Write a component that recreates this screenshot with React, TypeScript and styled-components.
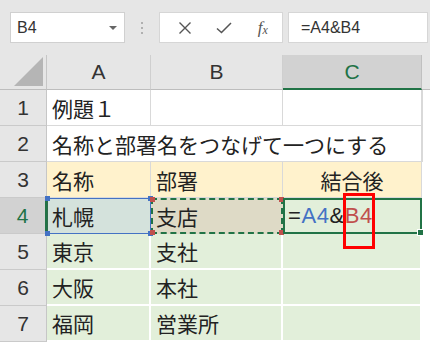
import React from 'react'
import styled, { createGlobalStyle } from 'styled-components'

const Global = createGlobalStyle`
  html, body { margin: 0; padding: 0; background: #ffffff; }
  body { font-family: "Noto Sans CJK JP", "Liberation Sans", sans-serif; }
`

const CJK = `"Noto Sans CJK JP", sans-serif`
const LATIN = `"Liberation Sans", Arial, sans-serif`

const rows = [
  { n: 1 },
  { n: 2 },
  { n: 3 },
  { n: 4 },
  { n: 5, a: '東京', b: '支社' },
  { n: 6, a: '大阪', b: '本社' },
  { n: 7, a: '福岡', b: '営業所' },
]

const App = () => {
  return (
    <>
      <Global />
      <Window>
        <Toolbar>
          <NameBox>
            <NameText>B4</NameText>
            <Caret />
          </NameBox>
          <Grip>
            <Dot />
            <Dot />
            <Dot />
          </Grip>
          <FxBox>
            <FxButton>
              <svg width="14" height="14" viewBox="0 0 14 14">
                <path d="M1.5 1.5 L12.5 12.5 M12.5 1.5 L1.5 12.5" stroke="#555" strokeWidth="1.4" fill="none" />
              </svg>
            </FxButton>
            <FxButton>
              <svg width="16" height="12" viewBox="0 0 16 12">
                <path d="M1 6.5 L5.5 10.5 L15 1" stroke="#555" strokeWidth="1.5" fill="none" />
              </svg>
            </FxButton>
            <FxButton>
              <FxText>
                f<sub>x</sub>
              </FxText>
            </FxButton>
          </FxBox>
          <FormulaInput>=A4&amp;B4</FormulaInput>
        </Toolbar>

        <Sheet>
          <Corner>
            <Triangle />
          </Corner>
          <ColHead>A</ColHead>
          <ColHead>B</ColHead>
          <ColHead $active>C</ColHead>
          <ColFill />

          {rows.map((r) => (
            <React.Fragment key={r.n}>
              <RowHead $active={r.n === 4}>{r.n}</RowHead>
              {r.n === 1 && (
                <>
                  <Cell>例題１</Cell>
                  <Cell />
                  <Cell />
                </>
              )}
              {r.n === 2 && <Cell $span={3}>名称と部署名をつなげて一つにする</Cell>}
              {r.n === 3 && (
                <>
                  <Cell $bg="#fff2cc">名称</Cell>
                  <Cell $bg="#fff2cc">部署</Cell>
                  <Cell $bg="#fff2cc" $center>結合後</Cell>
                </>
              )}
              {r.n === 4 && (
                <>
                  <RefCellA>
                    札幌
                    <Handle $c="#4472c4" $x="left" $y="top" />
                    <Handle $c="#4472c4" $x="right" $y="top" />
                    <Handle $c="#4472c4" $x="left" $y="bottom" />
                    <Handle $c="#4472c4" $x="right" $y="bottom" />
                  </RefCellA>
                  <RefCellB>
                    支店
                    <Handle $c="#c0504d" $x="left" $y="top" />
                    <Handle $c="#c0504d" $x="right" $y="top" />
                    <Handle $c="#c0504d" $x="left" $y="bottom" />
                    <Handle $c="#c0504d" $x="right" $y="bottom" />
                  </RefCellB>
                  <ActiveCell>
                    <Formula>
                      =<Ref $c="#4472c4">A4</Ref>&amp;<Ref $c="#c0504d">B4</Ref>
                      <Cursor />
                    </Formula>
                    <Mark />
                    <FillHandle />
                  </ActiveCell>
                </>
              )}
              {r.a && (
                <>
                  <Cell $bg="#e2efda" $line="#ffffff">{r.a}</Cell>
                  <Cell $bg="#e2efda" $line="#ffffff">{r.b}</Cell>
                  <Cell $bg="#e2efda" $line="#ffffff" />
                </>
              )}
              <Fill $edge={r.n <= 2} />
            </React.Fragment>
          ))}
        </Sheet>
      </Window>
    </>
  )
}

export default App

const Window = styled.div`
width: 430px;
height: 350px;
overflow: hidden;
background: #ffffff;
`

const Toolbar = styled.div`
height: 55px;
box-sizing: border-box;
padding: 12px 0 0 10px;
background: #e6e6e6;
display: flex;
align-items: flex-start;
`

const NameBox = styled.div`
width: 115px;
height: 31px;
box-sizing: border-box;
background: #ffffff;
border: 1px solid #d0d0d0;
display: flex;
align-items: center;
justify-content: space-between;
padding: 0 7px 0 6px;
`

const NameText = styled.span`
font-family: ${LATIN};
font-size: 16px;
color: #333;
`

const Caret = styled.span`
width: 0;
height: 0;
border-left: 4px solid transparent;
border-right: 4px solid transparent;
border-top: 4px solid #666;
`

const Grip = styled.div`
width: 34px;
height: 31px;
display: flex;
flex-direction: column;
align-items: center;
justify-content: center;
gap: 3px;
`

const Dot = styled.span`
width: 2px;
height: 2px;
background: #b0b0b0;
`

const FxBox = styled.div`
width: 124px;
height: 31px;
box-sizing: border-box;
background: #ffffff;
border: 1px solid #d6d6d6;
display: flex;
align-items: center;
padding-left: 6px;
`

const FxButton = styled.div`
width: 40px;
height: 100%;
display: flex;
align-items: center;
justify-content: center;
`

const FxText = styled.span`
font-family: "Liberation Serif", "Times New Roman", serif;
font-style: italic;
font-size: 17px;
color: #555;
sub {
  font-size: 12px;
  vertical-align: -1px;
}
`

const FormulaInput = styled.div`
flex: 1;
margin-left: 5px;
margin-right: 2px;
height: 31px;
box-sizing: border-box;
background: #ffffff;
border: 1px solid #d6d6d6;
padding-left: 12px;
display: flex;
align-items: center;
font-family: ${LATIN};
font-size: 16px;
color: #333;
`

const Sheet = styled.div`
display: grid;
grid-template-columns: 47px 104px 132px 139px 1fr;
grid-template-rows: 35px repeat(7, 36px);
`

const Corner = styled.div`
background: #e6e6e6;
border-right: 1px solid #c6c6c6;
border-bottom: 1px solid #bdbdbd;
display: flex;
align-items: flex-end;
justify-content: flex-end;
padding: 0 3px 3px 0;
`

const Triangle = styled.div`
width: 29px;
height: 29px;
background: #b5b5b5;
clip-path: polygon(100% 0, 100% 100%, 0 100%);
`

const ColHead = styled.div<{ $active?: boolean }>`
background: ${(p) => (p.$active ? '#d2d2d2' : '#e6e6e6')};
border-right: 1px solid ${(p) => (p.$active ? '#c0c0c0' : '#cfcfcf')};
border-bottom: ${(p) => (p.$active ? '2px solid #217346' : '1px solid #bdbdbd')};
box-sizing: border-box;
display: flex;
align-items: center;
justify-content: center;
font-family: ${LATIN};
font-size: 21px;
color: ${(p) => (p.$active ? '#217346' : '#333')};
`

const ColFill = styled.div`
background: #e6e6e6;
border-bottom: 1px solid #bdbdbd;
`

const RowHead = styled.div<{ $active?: boolean }>`
background: ${(p) => (p.$active ? '#d2d2d2' : '#e6e6e6')};
border-right: ${(p) => (p.$active ? '2px solid #217346' : '1px solid #c6c6c6')};
border-bottom: 1px solid #cacaca;
box-sizing: border-box;
display: flex;
align-items: center;
justify-content: center;
font-family: ${LATIN};
font-size: 21px;
color: ${(p) => (p.$active ? '#217346' : '#333')};
`

const Cell = styled.div<{ $bg?: string; $line?: string; $center?: boolean; $span?: number }>`
grid-column: span ${(p) => p.$span || 1};
background: ${(p) => p.$bg || '#ffffff'};
border-right: ${(p) => (p.$line ? `2px solid ${p.$line}` : '1px solid #d9d9d9')};
border-bottom: ${(p) => (p.$line ? `2px solid ${p.$line}` : '1px solid #d9d9d9')};
box-sizing: border-box;
display: flex;
align-items: center;
justify-content: ${(p) => (p.$center ? 'center' : 'flex-start')};
padding: 0 5px;
font-family: ${CJK};
font-size: 21px;
color: #222;
white-space: nowrap;
overflow: visible;
`

const RefCellA = styled.div`
position: relative;
background: #d4e2dc;
border: 1px solid #4472c4;
border-left-color: #2f6b4a;
box-sizing: border-box;
display: flex;
align-items: center;
padding: 0 4px;
font-family: ${CJK};
font-size: 21px;
color: #222;
`

const RefCellB = styled.div`
position: relative;
background: #dedac6;
border: 2px dashed #217346;
box-sizing: border-box;
display: flex;
align-items: center;
padding: 0 3px;
font-family: ${CJK};
font-size: 21px;
color: #222;
`

const Handle = styled.span<{ $c: string; $x: 'left' | 'right'; $y: 'top' | 'bottom' }>`
position: absolute;
width: 5px;
height: 5px;
background: ${(p) => p.$c};
${(p) => p.$x}: -3px;
${(p) => p.$y}: -3px;
`

const ActiveCell = styled.div`
position: relative;
background: #e2efda;
border: 2px solid #217346;
box-sizing: border-box;
display: flex;
align-items: center;
padding: 0 3px;
`

const Formula = styled.span`
display: flex;
align-items: center;
font-family: ${LATIN};
font-size: 22px;
letter-spacing: 0.6px;
color: #222;
`

const Ref = styled.span<{ $c: string }>`
color: ${(p) => p.$c};
`

const Cursor = styled.span`
width: 1px;
height: 26px;
margin-left: 1px;
background: #888;
`

const Mark = styled.div`
position: absolute;
left: 58px;
top: -7px;
width: 32px;
height: 56px;
border: 3px solid #ff0000;
box-sizing: border-box;
`

const FillHandle = styled.span`
position: absolute;
right: -4px;
bottom: -4px;
width: 5px;
height: 5px;
background: #217346;
border: 1px solid #ffffff;
`

const Fill = styled.div<{ $edge?: boolean }>`
background: #ffffff;
border-left: ${(p) => (p.$edge ? '1px solid #d9d9d9' : 'none')};
`
